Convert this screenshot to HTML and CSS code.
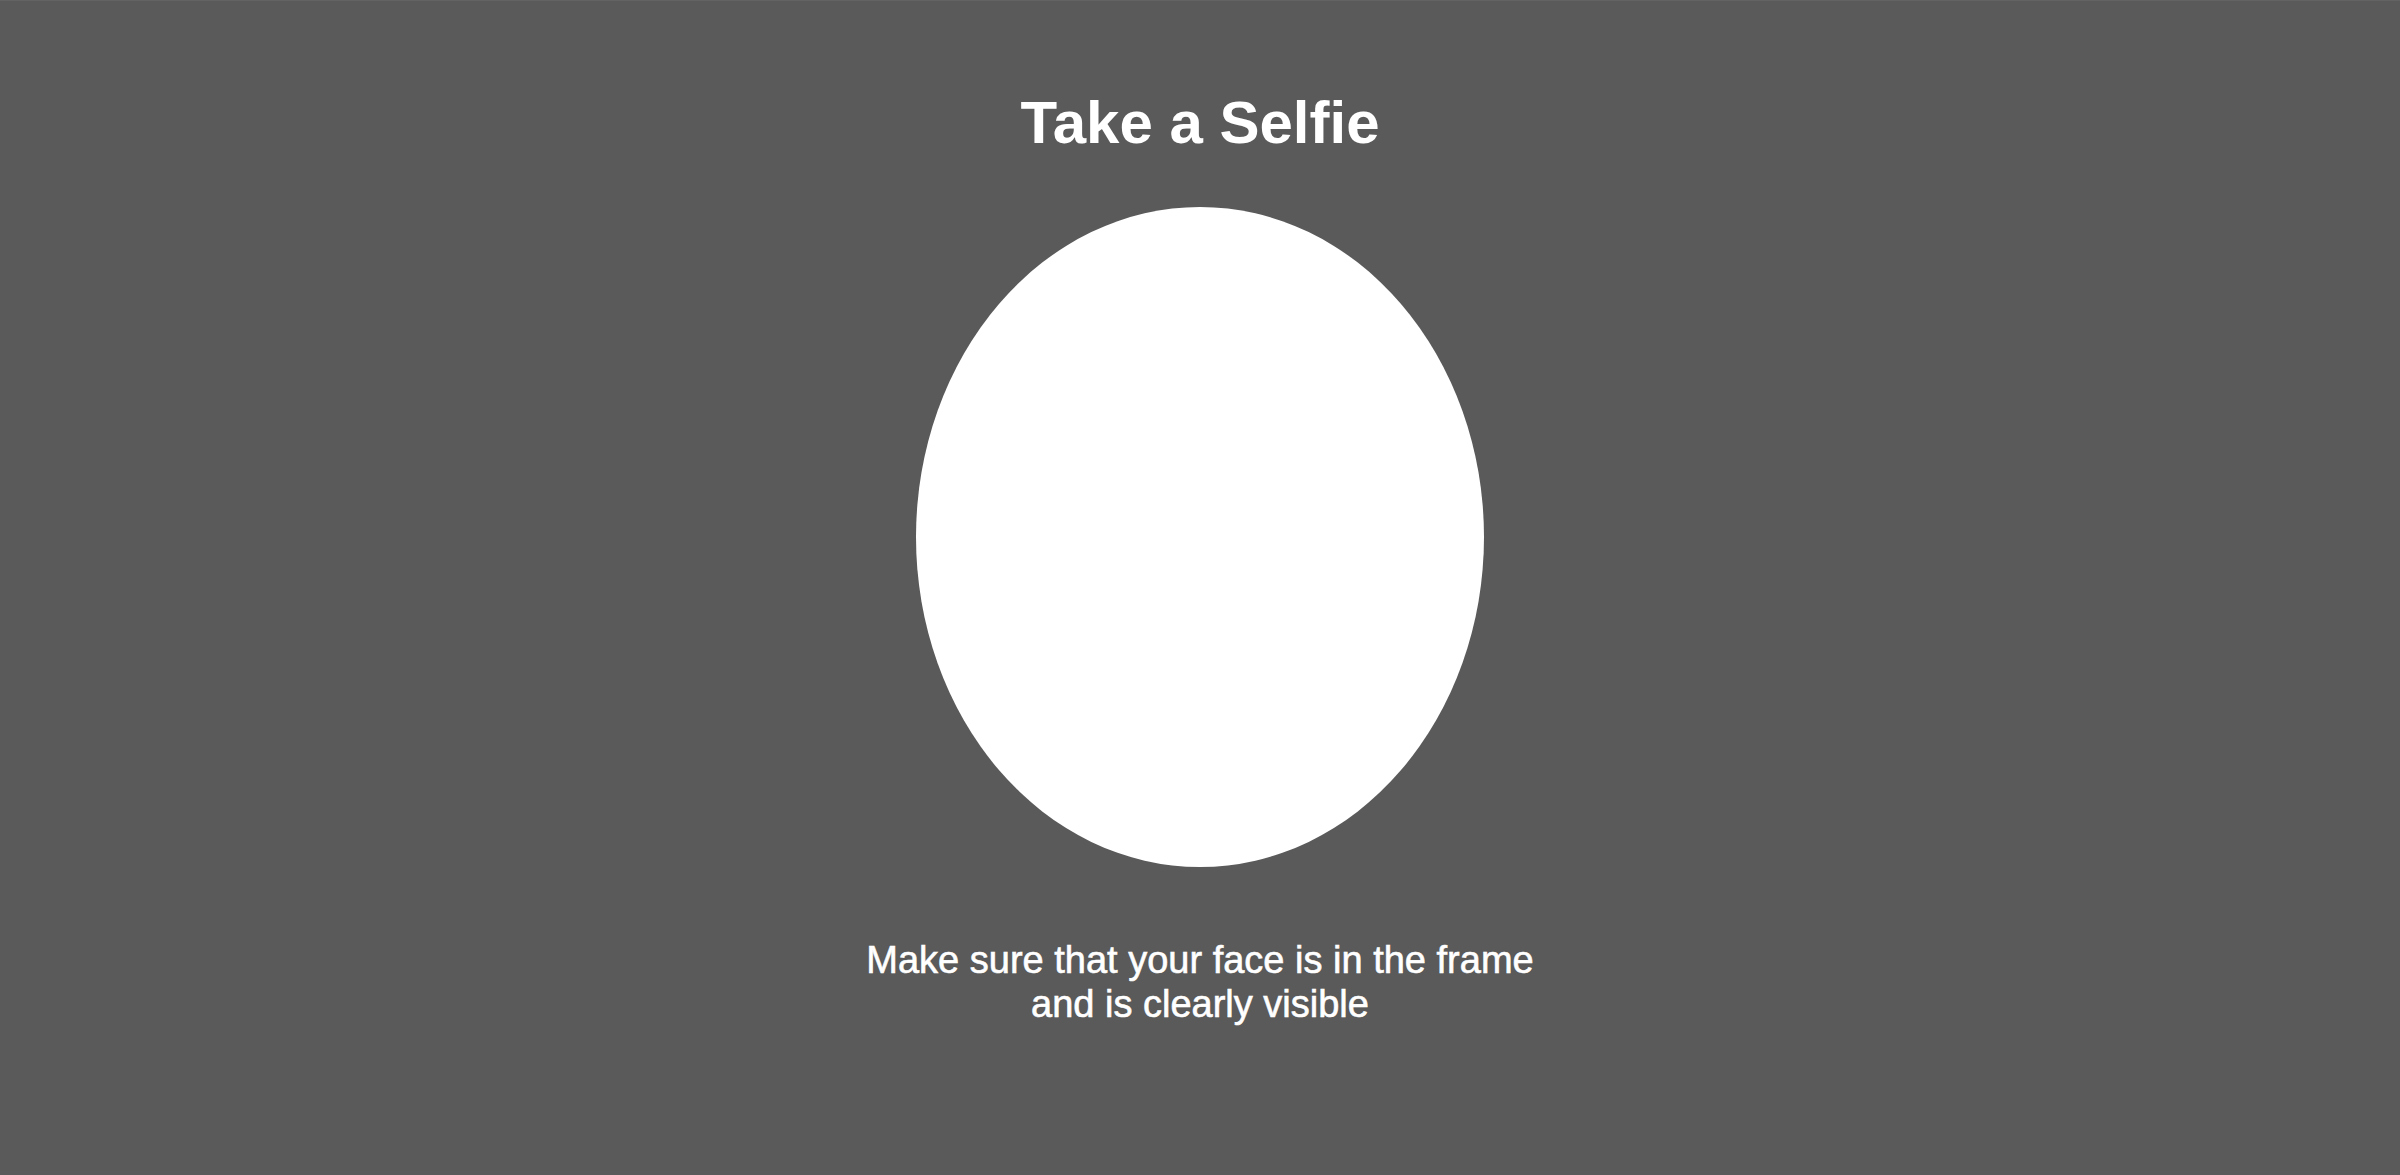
FILE: index.html
```html
<!DOCTYPE html>
<html lang="en">
<head>
<meta charset="utf-8">
<title>Take a Selfie</title>
<link rel="stylesheet" href="styles.css">
</head>
<body>
<main class="selfie">
  <h1 class="selfie__title">Take a Selfie</h1>
  <div class="selfie__frame"></div>
  <p class="selfie__hint">Make sure that your face is in the frame<br>and is clearly visible</p>
</main>
</body>
</html>
```

FILE: styles.css
```css
html, body {
  margin: 0;
  padding: 0;
  height: 100%;
}
body {
  background: #5a5a5a;
  font-family: "Liberation Sans", Arial, Helvetica, sans-serif;
  color: #ffffff;
  border-top: 1px solid #636363;
  box-sizing: border-box;
  overflow: hidden;
}
.selfie {
  display: flex;
  flex-direction: column;
  align-items: center;
  padding-top: 92px;
}
.selfie__title {
  margin: 0;
  font-size: 60px;
  line-height: 60px;
  font-weight: 700;
}
.selfie__frame {
  margin-top: 54px;
  width: 568px;
  height: 660px;
  border-radius: 50%;
  background: #ffffff;
}
.selfie__hint {
  margin: 71px 0 0;
  font-size: 38px;
  line-height: 44px;
  font-weight: 400;
  text-align: center;
  -webkit-text-stroke: 0.6px #ffffff;
}
```
